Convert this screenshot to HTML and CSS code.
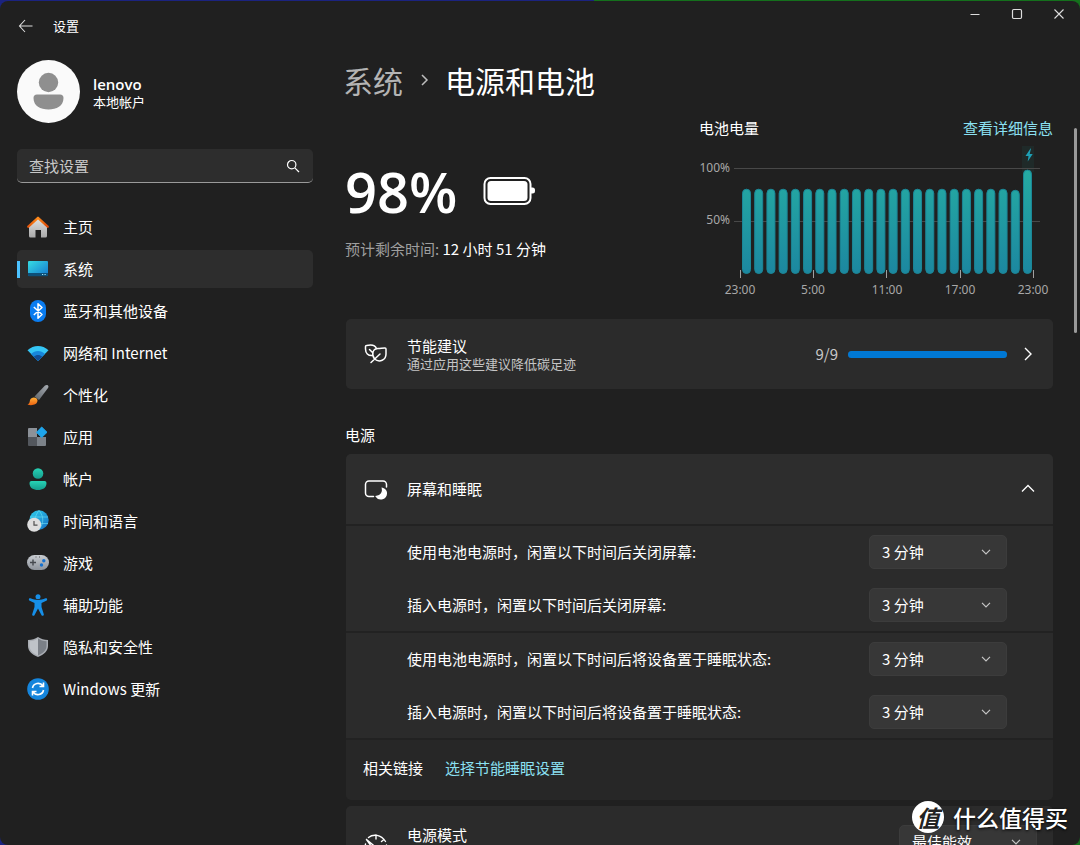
FILE: index.html
```html
<!DOCTYPE html>
<html lang="zh-CN">
<head>
<meta charset="utf-8">
<meta name="viewport" content="width=device-width, initial-scale=1">
<title>设置</title>
<link rel="stylesheet" href="styles.css">
</head>
<body>
<div class="window">
  <header class="titlebar">
    <button class="back" aria-label="返回"><svg width="16" height="14" viewBox="0 0 16 14" fill="none" stroke="currentColor" stroke-width="1.1"><path d="M7 1 1.500 7 7 13M1.500 7H14.500"/></svg></button>
    <span class="app-title">设置</span>
    <div class="controls">
      <button aria-label="最小化"><svg width="12" height="12" viewBox="0 0 12 12" stroke="currentColor" stroke-width="1"><path d="M1.500 6.500h9"/></svg></button>
      <button aria-label="最大化"><svg width="12" height="12" viewBox="0 0 12 12" fill="none" stroke="currentColor" stroke-width="1.200"><rect x="1.500" y="1.500" width="9" height="9" rx="1.200"/></svg></button>
      <button aria-label="关闭"><svg width="12" height="12" viewBox="0 0 12 12" stroke="currentColor" stroke-width="1.100"><path d="m1.500 1.500 9 9m0-9-9 9"/></svg></button>
    </div>
  </header>

  <aside class="sidebar">
    <div class="profile">
      <svg class="avatar" viewBox="0 0 63 63"><circle cx="31.500" cy="31.500" r="31.500" fill="#fafafa"/><circle cx="31.500" cy="22.500" r="9.700" fill="#8f8f8f"/><path d="M20 34.500h23a3.500 3.500 0 0 1 3.500 3.500c0 8-7 11.500-15 11.500s-15-3.500-15-11.500a3.500 3.500 0 0 1 3.500-3.500z" fill="#8f8f8f"/></svg>
      <div>
        <div class="user-name">lenovo</div>
        <div class="user-type">本地帐户</div>
      </div>
    </div>
    <div class="search">
      <input type="search" placeholder="查找设置" aria-label="查找设置">
      <svg width="14" height="14" viewBox="0 0 14 14" fill="none" stroke="currentColor" stroke-width="1.200"><circle cx="5.700" cy="5.700" r="4.200"/><path d="m8.800 8.800 4.200 4.200"/></svg>
    </div>
    <nav class="nav">
      <a href="#home"><svg viewBox="0 0 22 22"><defs><linearGradient id="g-wall" x2="0" y2="1"><stop stop-color="#e2e2e2"/><stop offset="1" stop-color="#a9a9a9"/></linearGradient><linearGradient id="g-roof"><stop stop-color="#e2550c"/><stop offset=".5" stop-color="#ff8c1a"/><stop offset="1" stop-color="#d9480b"/></linearGradient></defs><path d="M2 10 11 2l9 8v10a1.500 1.500 0 0 1-1.500 1.500H14V14H8.500v7.500h-5A1.500 1.500 0 0 1 2 20z" fill="url(#g-wall)"/><path d="M1.300 10.700 11 1.800l9.700 8.900" fill="none" stroke="url(#g-roof)" stroke-width="2.300" stroke-linecap="round" stroke-linejoin="round"/></svg>主页</a>
      <a href="#system" class="current" aria-current="page"><svg viewBox="0 0 22 22"><defs><linearGradient id="g-scr" x2="1" y2="1"><stop stop-color="#36dce3"/><stop offset="1" stop-color="#1577cf"/></linearGradient></defs><rect x="1" y="3" width="20" height="15" rx="1" fill="url(#g-scr)"/><path d="M1 15h20v2.200a1 1 0 0 1-1 1H2a1 1 0 0 1-1-1z" fill="#0d4f78"/><path d="M15 16.500h1.200m1.300 0h1.200" stroke="#9fe2f5" stroke-width="1"/></svg>系统</a>
      <a href="#bluetooth"><svg viewBox="0 0 22 22"><rect x="3" y="0" width="16" height="22" rx="8" fill="#0a7cf0"/><path d="m6.800 7 8.200 7.500-4 3.700V3.800l4 3.700L6.800 15" fill="none" stroke="#fff" stroke-width="1.500" stroke-linejoin="round"/></svg>蓝牙和其他设备</a>
      <a href="#network"><svg viewBox="0 0 22 22"><path d="M11 19 .5 8.300C6.500 2.500 15.500 2.500 21.500 8.300z" fill="#35c6f5"/><path d="M11 19 4 11.900c4-4 10-4 14 0z" fill="#1787dc"/><path d="M11 19 6.800 14.700c2.500-2.300 5.900-2.300 8.400 0z" fill="#104e98"/></svg>网络和 Internet</a>
      <a href="#personal"><svg viewBox="0 0 22 22"><defs><linearGradient id="g-br" x1="1" x2="0" y2="1"><stop stop-color="#a8adb3"/><stop offset="1" stop-color="#5d6369"/></linearGradient><linearGradient id="g-or" x2="0" y2="1"><stop stop-color="#ffb13a"/><stop offset="1" stop-color="#ee6310"/></linearGradient></defs><path d="M7.500 12.500 18 1.500C20 0 22.500 1.500 21 4L12 16z" fill="url(#g-br)"/><path d="M10.500 16.500c0 4.500-6.500 5.500-10 4 2-.8 2-2.200 2.500-4.300 1-4 7.500-3.500 7.500.3z" fill="url(#g-or)"/></svg>个性化</a>
      <a href="#apps"><svg viewBox="0 0 22 22"><path d="M2 2h8v9H1V3a1 1 0 0 1 1-1z" fill="#8c9198"/><path d="M1 11h9v9H2a1 1 0 0 1-1-1z" fill="#53575d"/><path d="M10 11h9v8a1 1 0 0 1-1 1h-8z" fill="#7c8289"/><path d="m14.700 1 5.300 5.300-5.300 5.200-5.200-5.200z" fill="#1ea5ec" stroke="#1ea5ec" stroke-width="1" stroke-linejoin="round"/></svg>应用</a>
      <a href="#accounts"><svg viewBox="0 0 22 22"><defs><linearGradient id="g-ac" x2="0" y2="1"><stop stop-color="#27d3b5"/><stop offset="1" stop-color="#159c8d"/></linearGradient></defs><circle cx="11" cy="5.500" r="5.300" fill="url(#g-ac)"/><path d="M4.500 13h13a2 2 0 0 1 2 2c0 5-4 7-8.500 7s-8.500-2-8.500-7a2 2 0 0 1 2-2z" fill="url(#g-ac)"/></svg>帐户</a>
      <a href="#time"><svg viewBox="0 0 22 22"><defs><linearGradient id="g-gl" x2="1" y2="1"><stop stop-color="#30d0ec"/><stop offset="1" stop-color="#1670c6"/></linearGradient></defs><circle cx="12" cy="10" r="9.700" fill="url(#g-gl)"/><path d="M3 7h18M4 13.500h17M12 .5c-5 6-5 13 0 19M12 .5c5 6 5 13 0 19" fill="none" stroke="#75e4f4" stroke-width=".8" opacity=".7"/><circle cx="7.200" cy="14.700" r="7" fill="#dedede"/><path d="M7 11v4.200h3.500" fill="none" stroke="#505050" stroke-width="1.200"/></svg>时间和语言</a>
      <a href="#gaming"><svg viewBox="0 0 22 22"><defs><linearGradient id="g-pad" x2="0" y2="1"><stop stop-color="#c8ccd1"/><stop offset="1" stop-color="#8e949c"/></linearGradient></defs><rect y="3" width="22" height="15" rx="7.500" fill="url(#g-pad)"/><path d="M6 7.500v6M3 10.500h6" stroke="#45494f" stroke-width="1.400"/><circle cx="16.800" cy="8.700" r="1.700" fill="#1672d0"/><circle cx="14.500" cy="13" r="1.700" fill="#1672d0"/><path d="M8.500 5h1m2.500 0h1" stroke="#555" stroke-width="1.200"/></svg>游戏</a>
      <a href="#access"><svg viewBox="0 0 22 22" fill="#168fe8"><circle cx="11" cy="2.800" r="2.500"/><path d="M3.500 4.300c2.500 1 5 1.700 7.500 1.700s5-.7 7.500-1.700c1.700-.5 2.300 1.700.8 2.400L14.500 9v4l2.300 7.200c.4 1.600-1.700 2.300-2.400.8L11 14.500 7.600 21c-.7 1.500-2.800.8-2.400-.8L7.500 13V9L2.700 6.700C1.200 6 1.800 3.800 3.500 4.300z"/></svg>辅助功能</a>
      <a href="#privacy"><svg viewBox="0 0 22 22"><path d="M11 1c3 2 6 3 10 3v6c0 5-4 8.500-10 11C5 18.500 1 15 1 10V4c4 0 7-1 10-3z" fill="#a9adb3"/><path d="M11 2.500c2.500 1.600 5 2.600 8.500 2.700V10c0 4-3 7-8.500 9.500z" fill="#7b8087"/><path d="M11 2.500C8.500 4.100 6 5.100 2.500 5.200V10c0 4 3 7 8.500 9.500z" fill="#bfc3c8"/></svg>隐私和安全性</a>
      <a href="#update"><svg viewBox="0 0 22 22"><circle cx="11" cy="11" r="10.800" fill="#1585dc"/><path d="M5.500 10c.8-5 7.500-6.300 10.500-2M16.500 4.500V8.500h-4M16.500 12c-.8 5-7.500 6.300-10.500 2M5.500 17.500v-4h4" fill="none" stroke="#fff" stroke-width="1.600"/></svg>Windows 更新</a>
    </nav>
  </aside>

  <main class="content">
    <h1 class="crumbs"><a href="#system">系统</a><svg width="10" height="14" viewBox="0 0 10 14" fill="none" stroke="currentColor" stroke-width="1.500"><path d="m2 2 5 5-5 5"/></svg><span>电源和电池</span></h1>

    <section class="overview">
      <div class="charge">
        <div class="level"><span class="percent">98%</span>
          <svg width="53" height="30" viewBox="0 0 53 30"><rect x="1.500" y="2" width="46" height="26" rx="6" fill="none" stroke="#fff" stroke-width="2"/><rect x="4.500" y="5" width="40" height="20" rx="3.500" fill="#fff"/><path d="M48 11.500h1.500a2.500 2.500 0 0 1 2.500 2.500v1a2.500 2.500 0 0 1-2.500 2.500H48z" fill="#fff"/></svg>
        </div>
        <p class="estimate">预计剩余时间: <strong>12 小时 51 分钟</strong></p>
      </div>
      <div class="history">
        <div class="history-head"><h2>电池电量</h2><a href="#details">查看详细信息</a></div>
        <svg class="chart" width="354" height="156" viewBox="0 0 354 156" role="img" aria-label="电池电量">
          <defs>
            <linearGradient id="bar" gradientUnits="userSpaceOnUse" x1="0" y1="26" x2="0" y2="132"><stop stop-color="#25aca3"/><stop offset="1" stop-color="#1c87a0"/></linearGradient>
          </defs>
          <rect x="323" y="4" width="12" height="26" fill="#1f2a29"/>
          <path d="M35 26.500h306M35 79.500h306" stroke="#484848"/>
          <g id="bars" fill="url(#bar)" stroke="#1b8797" stroke-width="1"></g>
          <path d="m331.500 6.500-5 7.500h3l-.8 5.500 5-7.500h-3l1.300-5.500z" fill="#1e9fb5"/>
          <path d="M41.500 128v8M114.500 128v8M187.500 128v8M261.500 128v8M334.500 128v8" stroke="#a0a0a0"/>
          <g class="axis" text-anchor="end"><text x="31" y="30">100%</text><text x="31" y="82">50%</text></g>
          <g class="axis" text-anchor="middle"><text x="41" y="152">23:00</text><text x="114" y="152">5:00</text><text x="188" y="152">11:00</text><text x="261" y="152">17:00</text><text x="334" y="152">23:00</text></g>
        </svg>
      </div>
    </section>

    <a class="card tips" href="#tips">
      <svg class="card-icon" viewBox="0 0 24 24" fill="none" stroke="currentColor" stroke-width="1.500" stroke-linecap="round" stroke-linejoin="round"><path d="M8.500 13.500C4 14 1.500 11 1.500 7V4.500c0-.6.4-1 1-1 4-1 8.500-.7 10 3"/><path d="M5.500 7.500 9 11M7 20.500l9-8.500M10.500 17C7 12 9 6.500 14 6.500c2.500 0 4.500-.5 7-.5.700 0 1 .4 1 1v5c0 6-6.500 9-11.500 5z"/></svg>
      <span class="card-text"><span>节能建议</span><small>通过应用这些建议降低碳足迹</small></span>
      <span class="count">9/9</span>
      <progress value="9" max="9" aria-label="节能建议进度"></progress>
      <svg class="chevron" width="14" height="14" viewBox="0 0 14 14" fill="none" stroke="currentColor" stroke-width="1.400"><path d="m4 1 6 6-6 6"/></svg>
    </a>

    <h2 class="section-title">电源</h2>
    <section class="panel">
      <button class="card panel-head" aria-expanded="true">
        <svg class="card-icon" viewBox="0 0 24 24" fill="none" stroke="currentColor" stroke-width="1.500" stroke-linecap="round"><path d="M9.500 19.500H5A3.500 3.500 0 0 1 1.500 16V7.500A3.500 3.500 0 0 1 5 4h14a3.500 3.500 0 0 1 3.500 3.500V10"/><path d="M18.500 11.500c1 4-1.500 7.500-6 8 2.500 3.700 8 2.500 9.500-1.300 1-2.700 0-5.600-3.500-6.700z" fill="currentColor"/></svg>
        <span class="card-text">屏幕和睡眠</span>
        <svg class="chevron" width="14" height="14" viewBox="0 0 14 14" fill="none" stroke="currentColor" stroke-width="1.300"><path d="m1 9.500 6-6 6 6"/></svg>
      </button>
      <div class="group">
        <div class="row"><label for="s1">使用电池电源时，闲置以下时间后关闭屏幕:</label><span class="select"><select id="s1"><option>3 分钟</option></select><svg width="10" height="6" viewBox="0 0 10 6"><path d="m1 .8 4 4 4-4"/></svg></span></div>
        <div class="row"><label for="s2">插入电源时，闲置以下时间后关闭屏幕:</label><span class="select"><select id="s2"><option>3 分钟</option></select><svg width="10" height="6" viewBox="0 0 10 6"><path d="m1 .8 4 4 4-4"/></svg></span></div>
      </div>
      <div class="group">
        <div class="row"><label for="s3">使用电池电源时，闲置以下时间后将设备置于睡眠状态:</label><span class="select"><select id="s3"><option>3 分钟</option></select><svg width="10" height="6" viewBox="0 0 10 6"><path d="m1 .8 4 4 4-4"/></svg></span></div>
        <div class="row"><label for="s4">插入电源时，闲置以下时间后将设备置于睡眠状态:</label><span class="select"><select id="s4"><option>3 分钟</option></select><svg width="10" height="6" viewBox="0 0 10 6"><path d="m1 .8 4 4 4-4"/></svg></span></div>
      </div>
      <div class="related"><span>相关链接</span><a href="#sleep">选择节能睡眠设置</a></div>
    </section>

    <section class="card mode">
      <svg class="card-icon" viewBox="0 0 24 24" fill="none" stroke="currentColor" stroke-width="1.400" stroke-linecap="round"><path d="M4.500 4.500C9 .8 17 1.200 21.500 8.500M2.500 6.500l9 7.500M2.500 6.500 8.500 15M1.500 11c-1 6 4 11.500 10.500 11.500 6 0 10.500-4.500 10.500-10.500M12 2v4M20 6.500l-2.500 2"/></svg>
      <label class="mode-label" for="mode">电源模式</label>
      <span class="select"><select id="mode"><option>最佳能效</option></select><svg width="10" height="6" viewBox="0 0 10 6"><path d="m1 .8 4 4 4-4"/></svg></span>
    </section>
  </main>
  <div class="scroll-thumb"></div>
</div>
<div class="watermark"><span class="seal">值</span><span>什么值得买</span></div>
<script src="chart.js"></script>
</body>
</html>
```
FILE: chart.js
```js
// Hourly battery levels, in percent.
const levels = Array(22).fill(80).concat(79, 98);
const base = 132;
const step = 281 / (levels.length - 1);
const bars = document.getElementById("bars");
levels.forEach((level, i) => {
  const bar = document.createElementNS("http://www.w3.org/2000/svg", "rect");
  const height = level * 1.06;
  bar.setAttribute("x", 43.5 + i * step);
  bar.setAttribute("y", base - height);
  bar.setAttribute("width", 8);
  bar.setAttribute("height", height - 0.5);
  bar.setAttribute("rx", 4);
  bars.append(bar);
});
```
FILE: styles.css
```css
* { box-sizing: border-box; }
body {
  margin: 0;
  height: 100vh;
  overflow: hidden;
  padding-top: 1px;
  background: linear-gradient(90deg, #1b2380 55%, #14701c 55%);
  color: #fff;
  font: 15px/20px "Noto Sans CJK SC", "Noto Sans", sans-serif;
}
button, input, select { font: inherit; color: inherit; border: 0; padding: 0; background: none; }
a { color: inherit; text-decoration: none; }
h1, h2, p { margin: 0; font-weight: 400; }
h2 { font-size: 15px; }
strong { font-weight: 400; }
svg { flex: none; display: block; }

.window {
  height: 100%;
  overflow: hidden;
  background: #202020;
  border-radius: 8px;
  display: grid;
  grid-template: 53px minmax(0, 1fr) / 313px minmax(0, 1fr) 6px;
}
.titlebar { grid-column: 1 / -1; display: flex; align-items: center; padding: 0 0 3px 18px; }
.back { color: #ddd; margin-right: 19px; }
.app-title { font-size: 13px; }
.controls { display: flex; align-self: flex-start; margin-left: auto; color: #ddd; }
.controls button { width: 42px; height: 26px; display: grid; place-items: center; }

.sidebar { padding: 6px 0 0 17px; }
.profile { display: flex; align-items: center; gap: 13px; }
.avatar { width: 63px; height: 63px; }
.user-name { font: 600 15px/20px "Open Sans", "Noto Sans CJK SC", sans-serif; }
.user-type { font-size: 13px; line-height: 16px; }
.search {
  display: flex;
  align-items: center;
  height: 34px;
  margin: 26px 0 25px;
  padding: 0 13px 0 12px;
  background: #2d2d2d;
  border-bottom: 1px solid #9a9a9a;
  border-radius: 5px;
}
.search input { flex: 1; min-width: 0; outline: 0; }
.search input::placeholder { color: #c8c8c8; opacity: 1; }
.nav { display: grid; gap: 4px; }
.nav a {
  display: flex;
  align-items: center;
  gap: 14px;
  height: 38px;
  padding-left: 10px;
  border-radius: 5px;
}
.nav svg { width: 22px; height: 22px; }
.nav .current {
  background: linear-gradient(#4cc2ff, #4cc2ff) left center / 3px 17px no-repeat #2d2d2d;
}

.content { padding: 4px 21px 0 33px; overflow: hidden; }
.crumbs { display: flex; align-items: center; font-size: 30px; line-height: 44px; margin-left: -3px; }
.crumbs a { color: #b4b4b4; }
.crumbs svg { color: #bdbdbd; margin: 0 15px 0 17px; }
.overview { display: flex; justify-content: space-between; margin: 16px 0 0 -1px; }
.charge { padding-top: 39px; }
.level { display: flex; align-items: center; gap: 26px; }
.percent { font: 600 56px/68px "Open Sans", sans-serif; }
.estimate { margin-top: 14px; color: #9e9e9e; }
.estimate strong { color: #fff; }
.history-head { display: flex; justify-content: space-between; margin-bottom: 4px; }
.history a, .related a { color: #8be0f2; }
.chart .axis { font: 12px "Noto Sans", sans-serif; fill: #a8a8a8; }

.card {
  display: flex;
  align-items: center;
  width: 100%;
  min-height: 70px;
  padding: 0 18px;
  background: #2b2b2b;
  border-radius: 5px;
  text-align: left;
}
.card-icon { width: 24px; height: 24px; margin-right: 19px; }
.card-text { flex: 1; display: grid; }
small { font-size: 13px; line-height: 16px; color: #c5c5c5; }
.tips { margin-top: 21px; }
.count { color: #c8c8c8; margin-right: 10px; }
progress { appearance: none; width: 159px; height: 7px; border: 0; margin-right: 14px; }
progress::-webkit-progress-bar { background: #444; border-radius: 4px; }
progress::-webkit-progress-value { background: #0078d4; border-radius: 4px; }
.section-title { margin: 36px 0 9px -1px; }
.panel { border-radius: 5px; overflow: hidden; }
.panel-head { border-radius: 0; background: #2d2d2d; }
.group, .related { border-top: 2px solid #222; background: #2b2b2b; }
.group { display: grid; gap: 19px; padding: 9px 46px 9px 61px; }
.row { display: flex; align-items: center; justify-content: space-between; }
.select { display: grid; width: 138px; height: 34px; }
.select select {
  grid-area: 1 / 1;
  appearance: none;
  padding: 0 12px;
  background: #373737;
  border: 1px solid #3c3c3c;
  border-radius: 5px;
}
.select svg {
  grid-area: 1 / 1;
  place-self: center end;
  margin-right: 16px;
  fill: none;
  stroke: #c5c5c5;
  stroke-width: 1.2;
  pointer-events: none;
}
.related { display: flex; align-items: center; gap: 22px; height: 62px; padding: 0 17px 4px; background: #272727; }
.mode { align-items: flex-start; margin-top: 6px; padding: 19px 16px 15px 18px; }
.mode .card-icon { margin-top: 8px; }
.mode-label { flex: 1; }

.scroll-thumb { width: 3px; height: 205px; margin-top: 74px; background: #9a9a9a; border-radius: 2px; }
.watermark {
  position: absolute;
  right: 12px;
  bottom: 12px;
  display: flex;
  align-items: center;
  gap: 9px;
  font: 500 23px/32px "Noto Sans CJK SC", sans-serif;
  text-shadow: 0 1px 3px #000;
}
.seal {
  width: 32px;
  border-radius: 50%;
  background: #fff;
  color: #222;
  font-style: italic;
  font-weight: 700;
  text-align: center;
  text-shadow: none;
}
```
